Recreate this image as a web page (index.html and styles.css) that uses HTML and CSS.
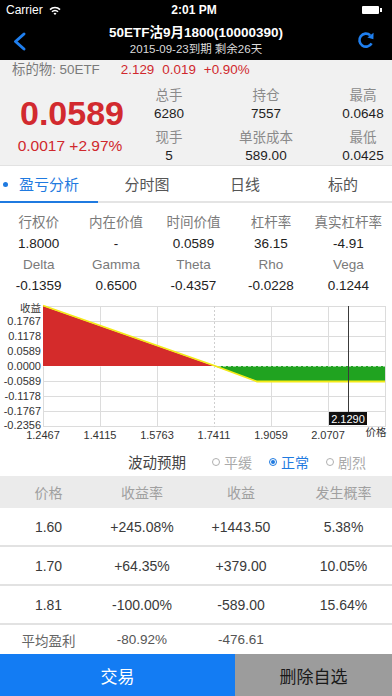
FILE: index.html
```html
<!DOCTYPE html>
<html lang="zh-CN">
<head>
<meta charset="utf-8">
<title>50ETF沽9月1800</title>
<link rel="stylesheet" href="styles.css">
</head>
<body>
<div class="screen">
  <div class="status">
    <div class="carrier">Carrier
      <svg class="wifi" width="12" height="9" viewBox="0 0 12 9">
        <path d="M1 3.6 A7 7 0 0 1 11 3.6" stroke="#fff" stroke-width="1.6" fill="none"/>
        <path d="M3 5.8 A4.2 4.2 0 0 1 9 5.8" stroke="#fff" stroke-width="1.6" fill="none"/>
        <path d="M6 9 L4.5 7.5 A2.1 2.1 0 0 1 7.5 7.5 Z" fill="#fff"/>
      </svg>
    </div>
    <div class="clock">2:01 PM</div>
    <div class="battery"><span class="batt-body"></span><span class="batt-nub"></span></div>
  </div>

  <div class="nav">
    <svg class="back" width="16" height="24" viewBox="0 0 16 24">
      <path d="M12 6 L3.5 13.5 L12 21" stroke="#1f7fef" stroke-width="3" fill="none" stroke-linecap="round" stroke-linejoin="round"/>
    </svg>
    <div class="title">
      <div class="t1">50ETF沽9月1800(10000390)</div>
      <div class="t2">2015-09-23到期 剩余26天</div>
    </div>
    <svg class="refresh" width="20" height="20" viewBox="0 0 20 20">
      <path d="M15.6 13.3 A6.5 6.5 0 1 1 14.2 5.2" stroke="#1f7fef" stroke-width="2.6" fill="none"/>
      <path d="M17.6 2.8 L17.4 9.2 L11.4 7.4 Z" fill="#1f7fef"/>
    </svg>
  </div>

  <div class="quote">
    <div class="underlying">
      <span>标的物: 50ETF</span>
      <span class="under-nums"><span>2.129</span><span>0.019</span><span>+0.90%</span></span>
    </div>
    <div class="pricebox">
      <div class="main">
        <div class="bigprice">0.0589</div>
        <div class="change">0.0017 +2.97%</div>
      </div>
      <div class="stats">
        <div class="stat"><div class="s-lbl">总手</div><div class="s-val">6280</div></div>
        <div class="stat"><div class="s-lbl">持仓</div><div class="s-val">7557</div></div>
        <div class="stat"><div class="s-lbl">最高</div><div class="s-val">0.0648</div></div>
        <div class="stat"><div class="s-lbl">现手</div><div class="s-val">5</div></div>
        <div class="stat"><div class="s-lbl">单张成本</div><div class="s-val">589.00</div></div>
        <div class="stat"><div class="s-lbl">最低</div><div class="s-val">0.0425</div></div>
      </div>
    </div>
  </div>

  <div class="tabs">
    <div class="tab active">盈亏分析</div>
    <div class="tab">分时图</div>
    <div class="tab">日线</div>
    <div class="tab">标的</div>
  </div>

  <div class="metrics">
    <div class="m-lbl">行权价</div><div class="m-lbl">内在价值</div><div class="m-lbl">时间价值</div><div class="m-lbl">杠杆率</div><div class="m-lbl">真实杠杆率</div>
    <div class="m-val">1.8000</div><div class="m-val">-</div><div class="m-val">0.0589</div><div class="m-val">36.15</div><div class="m-val">-4.91</div>
    <div class="m-lbl">Delta</div><div class="m-lbl">Gamma</div><div class="m-lbl">Theta</div><div class="m-lbl">Rho</div><div class="m-lbl">Vega</div>
    <div class="m-val">-0.1359</div><div class="m-val">0.6500</div><div class="m-val">-0.4357</div><div class="m-val">-0.0228</div><div class="m-val">0.1244</div>
  </div>

  <div class="chart">
    <svg width="392" height="150" viewBox="0 0 392 150">
      <g stroke="#dcdcdc" stroke-width="1">
        <line x1="43" y1="9.5" x2="385" y2="9.5"/>
        <line x1="43" y1="24.5" x2="385" y2="24.5"/>
        <line x1="43" y1="39.5" x2="385" y2="39.5"/>
        <line x1="43" y1="54.5" x2="385" y2="54.5"/>
        <line x1="43" y1="84.5" x2="385" y2="84.5"/>
        <line x1="43" y1="99.5" x2="385" y2="99.5"/>
        <line x1="43" y1="114.5" x2="385" y2="114.5"/>
        <line x1="43" y1="129.5" x2="385" y2="129.5"/>
        <line x1="43.5" y1="9" x2="43.5" y2="130"/>
        <line x1="100.5" y1="9" x2="100.5" y2="130"/>
        <line x1="157.5" y1="9" x2="157.5" y2="130"/>
        <line x1="271.5" y1="9" x2="271.5" y2="130"/>
        <line x1="328.5" y1="9" x2="328.5" y2="130"/>
        <line x1="385.5" y1="9" x2="385.5" y2="130"/>
      </g>
      <line x1="214.5" y1="9" x2="214.5" y2="130" stroke="#cfcfcf" stroke-dasharray="2,2"/>
      <polygon points="43,9 214,69 43,69" fill="#d42b2b"/>
      <polygon points="214,69 257,84 385,84 385,69" fill="#20a320"/>
      <line x1="43" y1="69.5" x2="385" y2="69.5" stroke="#ffffff" stroke-opacity="0.55" stroke-dasharray="3,2"/>
      <polyline points="43,8.5 214,68.5 257,84.5 385,84.5" fill="none" stroke="#f4ea17" stroke-width="1.8"/>
      <line x1="348.5" y1="9" x2="348.5" y2="115" stroke="#3a3a3a" stroke-width="1"/>
      <g class="axis" font-size="11" fill="#333" text-anchor="end">
        <text x="41" y="15" font-size="10.5">收益</text>
        <text x="41" y="28">0.1767</text>
        <text x="41" y="43">0.1178</text>
        <text x="41" y="58">0.0589</text>
        <text x="41" y="73">0.0000</text>
        <text x="41" y="88">-0.0589</text>
        <text x="41" y="103">-0.1178</text>
        <text x="41" y="118">-0.1767</text>
        <text x="41" y="132">-0.2356</text>
      </g>
      <g class="axis" font-size="11" fill="#333" text-anchor="middle">
        <text x="43" y="142">1.2467</text>
        <text x="100" y="142">1.4115</text>
        <text x="157" y="142">1.5763</text>
        <text x="214" y="142">1.7411</text>
        <text x="271" y="142">1.9059</text>
        <text x="328" y="142">2.0707</text>
        <text x="376" y="139" font-size="10.5">价格</text>
      </g>
      <rect x="329" y="115" width="38" height="13" fill="#111"/>
      <text class="axis" x="348" y="125.5" font-size="11" fill="#fff" text-anchor="middle">2.1290</text>
    </svg>
  </div>

  <div class="vol">
    <span class="vol-title">波动预期</span>
    <span class="radio"><span class="circle"></span>平缓</span>
    <span class="radio on"><span class="circle"></span>正常</span>
    <span class="radio"><span class="circle"></span>剧烈</span>
  </div>

  <div class="table">
    <div class="row head"><div>价格</div><div>收益率</div><div>收益</div><div>发生概率</div></div>
    <div class="row"><div>1.60</div><div>+245.08%</div><div>+1443.50</div><div>5.38%</div></div>
    <div class="row"><div>1.70</div><div>+64.35%</div><div>+379.00</div><div>10.05%</div></div>
    <div class="row"><div>1.81</div><div>-100.00%</div><div>-589.00</div><div>15.64%</div></div>
    <div class="row avg"><div class="avg-lbl">平均盈利</div><div>-80.92%</div><div>-476.61</div><div></div></div>
  </div>

  <div class="actions">
    <div class="btn trade">交易</div>
    <div class="btn remove">删除自选</div>
  </div>
</div>
</body>
</html>
```

FILE: styles.css
```css
* {
  box-sizing: border-box;
  margin: 0;
  padding: 0;
}

html, body {
  background: #fff;
}

body {
  width: 392px;
  height: 696px;
  overflow: hidden;
  font-family: "Liberation Sans", "Noto Sans CJK SC", sans-serif;
  color: #222;
}

.screen {
  width: 392px;
  height: 696px;
  display: flex;
  flex-direction: column;
}

/* status bar */
.status {
  height: 20px;
  flex: none;
  background: #000;
  color: #fff;
  display: grid;
  grid-template-columns: 1fr auto 1fr;
  align-items: center;
  font-size: 12px;
  padding: 0 10px 0 6px;
}

.carrier {
  display: flex;
  align-items: center;
  gap: 6px;
}

.clock {
  font-weight: bold;
}

.battery {
  justify-self: end;
  display: flex;
  align-items: center;
}

.batt-body {
  width: 17px;
  height: 8px;
  background: #fff;
  border-radius: 1px;
}

.batt-nub {
  width: 2px;
  height: 4px;
  background: #fff;
  margin-left: 1px;
}

/* nav bar */
.nav {
  height: 40px;
  flex: none;
  background: #000;
  display: grid;
  grid-template-columns: 60px 1fr 60px;
  align-items: center;
}

.back {
  margin-left: 12px;
}

.refresh {
  justify-self: end;
  margin-right: 16px;
}

.title {
  text-align: center;
  color: #fff;
}

.t1 {
  font-size: 13.5px;
  font-weight: bold;
  line-height: 17px;
}

.t2 {
  font-size: 11.5px;
  line-height: 16px;
  color: #dcdcdc;
}

/* quote block */
.quote {
  background: #f1f1f1;
  flex: none;
}

.underlying {
  height: 20px;
  line-height: 20px;
  padding-left: 12px;
  font-size: 13.4px;
  color: #7a7a7a;
  display: flex;
}

.under-nums {
  color: #d0282d;
  margin-left: 21px;
  display: flex;
  gap: 8px;
}

.pricebox {
  height: 85px;
  display: flex;
}

.main {
  width: 140px;
  padding-top: 16px;
  text-align: center;
}

.bigprice {
  font-size: 34px;
  line-height: 34px;
  font-weight: bold;
  color: #d22a2f;
  padding-left: 4px;
}

.change {
  font-size: 15.5px;
  line-height: 18px;
  color: #d0282d;
  margin-top: 7px;
}

.stats {
  flex: 1;
  display: grid;
  grid-template-columns: 58px 136px 58px;
  grid-template-rows: auto auto;
  row-gap: 6px;
  padding-top: 7px;
}

.stat {
  text-align: center;
  font-size: 13.5px;
  line-height: 18px;
  white-space: nowrap;
}

.s-lbl {
  color: #8a8a8a;
}

.s-val {
  color: #1e1e1e;
}

/* tabs */
.tabs {
  height: 38px;
  flex: none;
  background: #fff;
  border-top: 1px solid #e2e2e2;
  border-bottom: 2px solid #e4e4e4;
  display: grid;
  grid-template-columns: repeat(4, 1fr);
}

.tab {
  position: relative;
  display: flex;
  align-items: center;
  justify-content: center;
  font-size: 15px;
  color: #555;
}

.tab.active {
  color: #1f7ae0;
}

.tab.active::before {
  content: "";
  position: absolute;
  left: 3px;
  top: 50%;
  width: 5px;
  height: 5px;
  margin-top: -2px;
  border-radius: 50%;
  background: #1f7ae0;
}

.tab.active::after {
  content: "";
  position: absolute;
  left: 0;
  right: 0;
  bottom: -2px;
  height: 2px;
  background: #1f7ae0;
}

/* metrics */
.metrics {
  height: 94px;
  flex: none;
  display: grid;
  grid-template-columns: repeat(5, 1fr);
  padding: 10px 5px 0 0;
  font-size: 13.5px;
  line-height: 19.5px;
  text-align: center;
  white-space: nowrap;
}

.m-lbl {
  color: #7a7a7a;
}

.m-val {
  color: #222;
}

/* chart */
.chart {
  height: 150px;
  flex: none;
}

.chart svg {
  display: block;
}

.axis {
  font-family: "Liberation Sans", "Noto Sans CJK SC", sans-serif;
}

/* volatility selector */
.vol {
  height: 29px;
  flex: none;
  display: flex;
  align-items: center;
  padding-left: 128px;
  font-size: 14px;
}

.vol-title {
  font-size: 14.5px;
  color: #444;
  margin-right: 26px;
}

.radio {
  display: flex;
  align-items: center;
  color: #aaa;
  margin-right: 17px;
}

.circle {
  width: 8px;
  height: 8px;
  border: 1px solid #b0b0b0;
  border-radius: 50%;
  margin-right: 4px;
  display: flex;
  align-items: center;
  justify-content: center;
}

.radio.on {
  color: #1f7ae0;
}

.radio.on .circle {
  border-color: #1f7ae0;
}

.radio.on .circle::after {
  content: "";
  width: 4px;
  height: 4px;
  border-radius: 50%;
  background: #1f7ae0;
}

/* table */
.table {
  flex: none;
}

.row {
  display: grid;
  grid-template-columns: 97px 90px 108px 97px;
  height: 39px;
  align-items: center;
  text-align: center;
  font-size: 14px;
  color: #3a3a3a;
  background: #fff;
  border-bottom: 2px solid #e2e2e2;
  white-space: nowrap;
}

.row.head {
  height: 32px;
  background: #ebebeb;
  color: #a0a0a0;
  border-bottom: none;
}

.row.avg {
  height: 29px;
  border-bottom: none;
  font-size: 13.5px;
  color: #555;
}

.avg-lbl {
  color: #666;
}

/* actions */
.actions {
  height: 42px;
  flex: none;
  display: grid;
  grid-template-columns: 235px 1fr;
}

.btn {
  display: flex;
  align-items: center;
  justify-content: center;
  font-size: 17px;
}

.btn.trade {
  background: #137cf3;
  color: #fff;
}

.btn.remove {
  background: #9c9c9c;
  color: #1a1a1a;
}
```
